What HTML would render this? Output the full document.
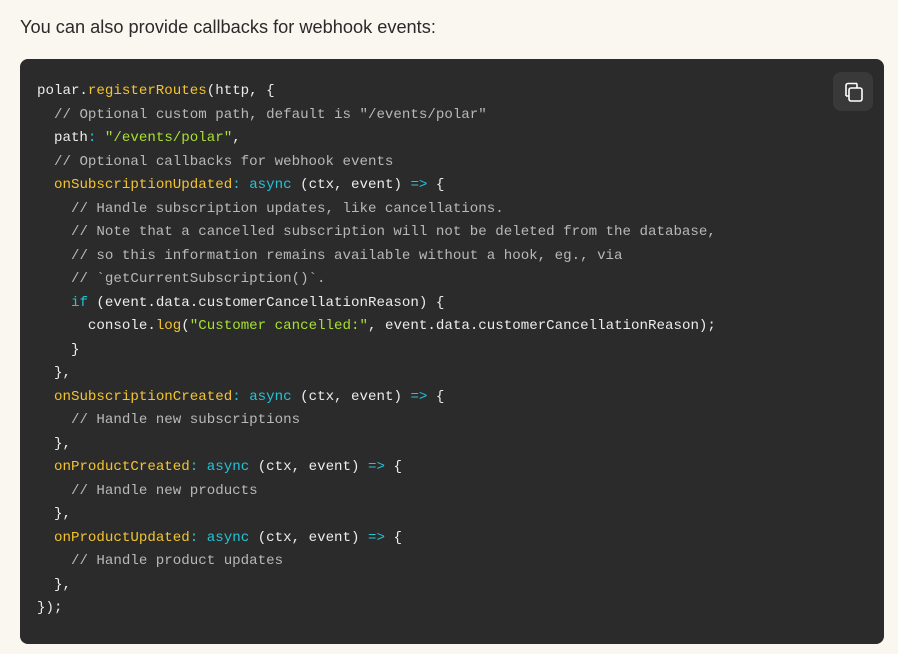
<!DOCTYPE html>
<html><head><style>
body{margin:0;background:#faf7f0;width:898px;height:654px;overflow:hidden;font-family:"Liberation Sans",sans-serif}
p{position:absolute;left:20px;top:17px;margin:0;font-size:18.2px;color:#2a2a2a}
.code{position:absolute;left:20px;top:59px;width:864px;height:585px;background:#2b2b2b;border-radius:8px}
pre{position:absolute;left:37px;top:80px;margin:0;font-family:"Liberation Mono",monospace;font-size:14.15px;line-height:23.5px;color:#ececec}
.c{color:#b8b8b8}.k{color:#f4c430}.a{color:#22c4d8}.s{color:#a6e22e}
.btn{position:absolute;left:833px;top:72px;width:40px;height:39px;background:#393939;border-radius:8px}
</style></head><body>
<p>You can also provide callbacks for webhook events:</p>
<div class="code"></div>
<div class="btn"><svg width="40" height="39" viewBox="0 0 40 39"><g fill="none" stroke="#fff" stroke-width="1.6"><rect x="16" y="16" width="13" height="13" rx="2"/><path d="M13 24V13.5a2 2 0 0 1 2-2H24"/><path d="M13 24h3M24 11.5v4.5"/></g></svg></div>
<pre>polar.<span class="k">registerRoutes</span>(http, {
  <span class="c">// Optional custom path, default is "/events/polar"</span>
  path<span class="a">:</span> <span class="s">"/events/polar"</span>,
  <span class="c">// Optional callbacks for webhook events</span>
  <span class="k">onSubscriptionUpdated</span><span class="a">:</span> <span class="a">async</span> (ctx, event) <span class="a">=&gt;</span> {
    <span class="c">// Handle subscription updates, like cancellations.</span>
    <span class="c">// Note that a cancelled subscription will not be deleted from the database,</span>
    <span class="c">// so this information remains available without a hook, eg., via</span>
    <span class="c">// `getCurrentSubscription()`.</span>
    <span class="a">if</span> (event.data.customerCancellationReason) {
      console.<span class="k">log</span>(<span class="s">"Customer cancelled:"</span>, event.data.customerCancellationReason);
    }
  },
  <span class="k">onSubscriptionCreated</span><span class="a">:</span> <span class="a">async</span> (ctx, event) <span class="a">=&gt;</span> {
    <span class="c">// Handle new subscriptions</span>
  },
  <span class="k">onProductCreated</span><span class="a">:</span> <span class="a">async</span> (ctx, event) <span class="a">=&gt;</span> {
    <span class="c">// Handle new products</span>
  },
  <span class="k">onProductUpdated</span><span class="a">:</span> <span class="a">async</span> (ctx, event) <span class="a">=&gt;</span> {
    <span class="c">// Handle product updates</span>
  },
});</pre>
</body></html>
